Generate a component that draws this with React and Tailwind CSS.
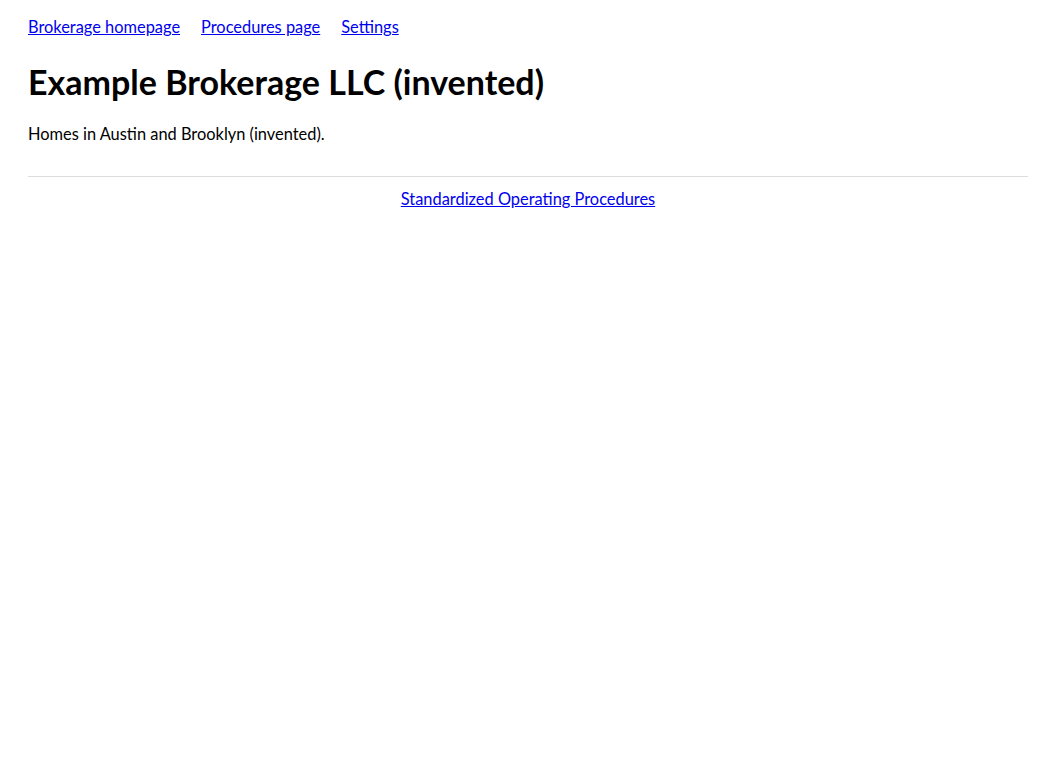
import React from "react";

export default function App() {
  return (
    <div className="min-h-screen bg-white px-7 pt-[15px] text-black font-['Lato',sans-serif] text-[16.4px]">
      <nav className="flex gap-[21px]">
        <a href="#" className="text-[#0000ee] underline">Brokerage homepage</a>
        <a href="#" className="text-[#0000ee] underline">Procedures page</a>
        <a href="#" className="text-[#0000ee] underline">Settings</a>
      </nav>
      <h1 className="mt-[21px] text-[34px] font-bold leading-tight">Example Brokerage LLC (invented)</h1>
      <p className="mt-[19px]">Homes in Austin and Brooklyn (invented).</p>
      <hr className="mt-[29px] border-t border-[#dddddd]" />
      <div className="mt-[10px] text-center">
        <a href="#" className="text-[#0000ee] underline">Standardized Operating Procedures</a>
      </div>
    </div>
  );
}
